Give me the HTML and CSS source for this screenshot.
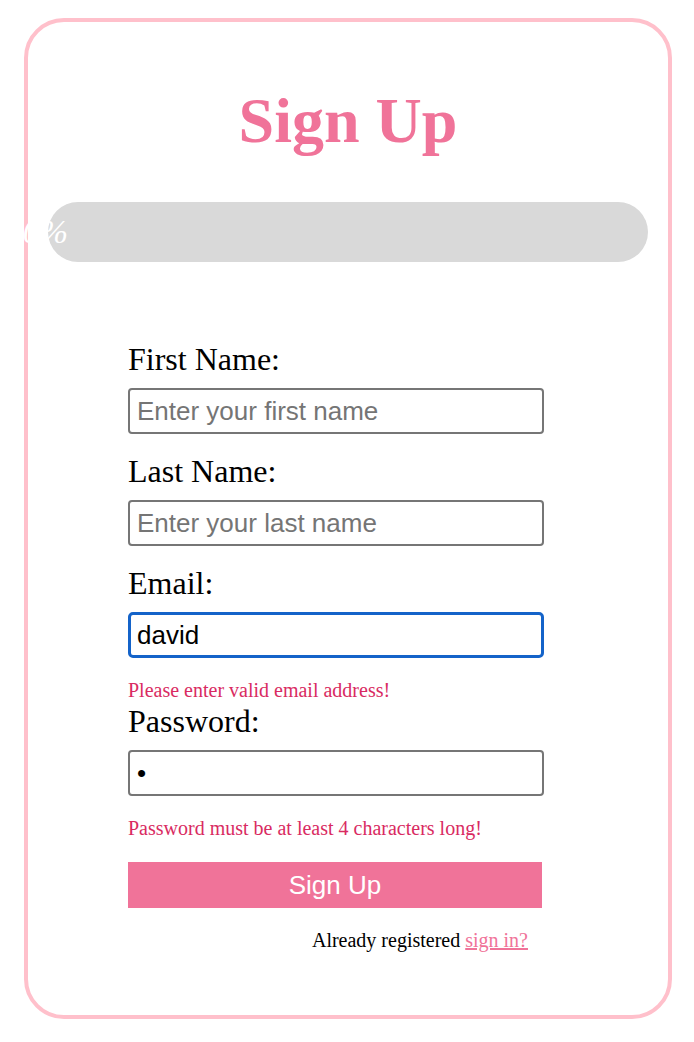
FILE: index.html
```html
<!DOCTYPE html>
<html lang="en">
<head>
<meta charset="utf-8">
<title>Sign Up</title>
<link rel="stylesheet" href="styles.css">
</head>
<body>
<div class="page">
  <div class="card">
    <h1 class="title">Sign Up</h1>
    <div class="progress">
      <span class="progress-label">0%</span>
    </div>
    <form class="form">
      <div class="field">
        <label class="label" for="first">First Name:</label>
        <input class="input" id="first" type="text" placeholder="Enter your first name">
      </div>
      <div class="field">
        <label class="label" for="last">Last Name:</label>
        <input class="input" id="last" type="text" placeholder="Enter your last name">
      </div>
      <div class="field field--error">
        <label class="label" for="email">Email:</label>
        <input class="input input--focus" id="email" type="text" value="david">
        <p class="error">Please enter valid email address!</p>
      </div>
      <div class="field field--error">
        <label class="label" for="pw">Password:</label>
        <input class="input" id="pw" type="password" value="a">
        <p class="error">Password must be at least 4 characters long!</p>
      </div>
      <button class="submit" type="button">Sign Up</button>
      <p class="signin">Already registered <a class="signin-link" href="#">sign in?</a></p>
    </form>
  </div>
</div>
</body>
</html>
```
FILE: styles.css
```css
html, body {
  margin: 0;
  padding: 0;
  background: #ffffff;
}

.page {
  padding: 18px 22px 0 24px;
}

.card {
  box-sizing: border-box;
  width: 648px;
  height: 1001px;
  border: 4px solid #ffc0cb;
  border-radius: 40px;
  padding-top: 63px;
  font-family: "Liberation Serif", "Times New Roman", serif;
  color: #000;
}

.title {
  margin: 0 0 45px;
  font-size: 64px;
  line-height: 72px;
  font-weight: bold;
  text-align: center;
  color: #f07399;
}

.progress {
  position: relative;
  width: 600px;
  height: 60px;
  margin: 0 auto;
  border-radius: 30px;
  background: #d9d9d9;
}

.progress-label {
  position: absolute;
  right: 100%;
  margin-right: -20px;
  top: 0;
  line-height: 60px;
  font-size: 34px;
  font-style: italic;
  color: #ffffff;
  white-space: nowrap;
}

.form {
  display: flex;
  flex-direction: column;
  width: 416px;
  margin: 79px 0 0 100px;
}

.field {
  display: flex;
  flex-direction: column;
  margin-bottom: 19px;
}

.field--error {
  margin-bottom: 0;
}

.label {
  font-size: 32px;
  line-height: 36px;
  margin-bottom: 11px;
}

.input {
  box-sizing: border-box;
  width: 416px;
  height: 46px;
  margin: 0;
  padding: 0 0 0 7px;
  border: 2px solid #767676;
  border-radius: 4px;
  font-family: "Liberation Sans", Arial, sans-serif;
  font-size: 26px;
  color: #000;
  background: #fff;
  outline: none;
}

.input::placeholder {
  color: #757575;
  opacity: 1;
}

.input--focus {
  border: 3px solid #1463c9;
  border-radius: 5px;
  padding-left: 6px;
}

.error {
  margin: 21px 0 2px;
  font-size: 20px;
  line-height: 22px;
  color: #d92b62;
}

.submit {
  width: 414px;
  height: 46px;
  margin-top: 21px;
  padding: 0;
  border: none;
  background: #f07399;
  color: #ffffff;
  font-family: "Liberation Sans", Arial, sans-serif;
  font-size: 26px;
  cursor: pointer;
}

.signin {
  margin: 21px 16px 0 0;
  font-size: 20px;
  line-height: 22px;
  text-align: right;
}

.signin-link {
  color: #f07399;
  text-decoration: underline;
}
```
